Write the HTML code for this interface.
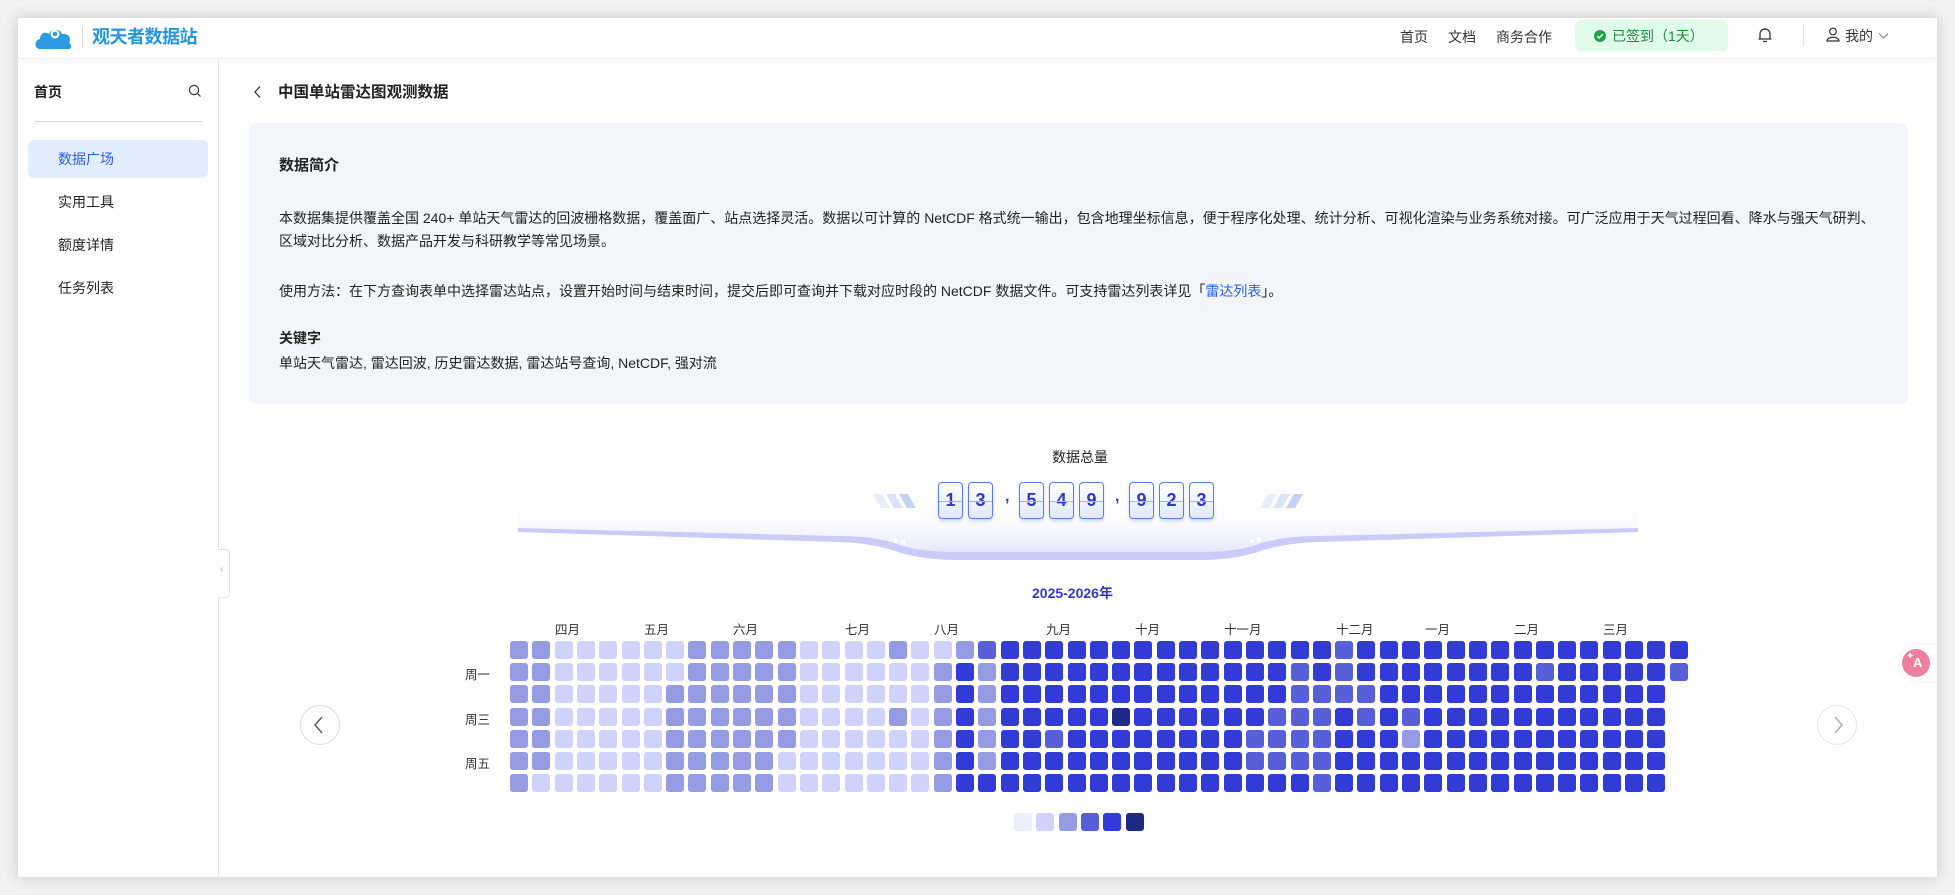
<!DOCTYPE html>
<html><head><meta charset="utf-8">
<style>
*{margin:0;padding:0;box-sizing:border-box}
body{width:1955px;height:895px;background:#f2f2f2;font-family:"Liberation Sans","Noto Sans CJK SC",sans-serif;color:#222;position:relative;overflow:hidden}
.win{position:absolute;left:18px;top:18px;width:1919px;height:859px;background:#fff;box-shadow:0 0 14px rgba(0,0,0,.18);overflow:hidden}
.hdr{position:absolute;left:0;top:0;width:100%;height:41px;background:#fff;border-bottom:1px solid #ececec;box-shadow:0 2px 8px rgba(0,0,0,.04)}
.abs{position:absolute;white-space:nowrap}
.side{position:absolute;left:0;top:41px;width:201px;height:818px;border-right:1px solid #e4e4e4}
.cell{position:absolute;width:18px;height:18px;border-radius:3px}
.dg{position:absolute;top:464px;width:25px;height:37px;border:1px solid #5a7cf0;border-radius:4px;background:linear-gradient(#fff,#dfeafe);box-shadow:0 2px 3px rgba(80,110,230,.25);color:#3438c8;font-weight:bold;font-size:18px;text-align:center;line-height:35px}
.dg:after{content:"";position:absolute;left:0;right:0;top:18px;height:1px;background:#9db4f5}
.cm{position:absolute;top:470px;color:#3438c8;font-weight:bold;font-size:16px}
.p{font-size:14px;color:#222;line-height:23px}
</style></head><body>
<div class="win">
 <div class="hdr">
  <svg class="abs" style="left:16px;top:7px" width="40" height="26" viewBox="0 0 40 26"><path d="M6 24 C0 24 0 15 6 14 C6 8 12 6 15 9 C17 3 26 3 28 9 C34 8 38 13 35 18 C39 20 37 25 33 24 Z" fill="#2a9be3"/><circle cx="21" cy="9" r="4.5" fill="#fff"/><circle cx="21" cy="9" r="2.3" fill="#2a9be3"/></svg>
  <div class="abs" style="left:64px;top:8px;width:1px;height:22px;background:#ddd"></div>
  <div class="abs" style="left:74px;top:5px;font-size:18px;font-weight:bold;color:#2496e0;letter-spacing:-0.5px">观天者数据站</div>
  <div class="abs" style="left:1382px;top:9px;font-size:14px;color:#333">首页</div>
  <div class="abs" style="left:1430px;top:9px;font-size:14px;color:#333">文档</div>
  <div class="abs" style="left:1478px;top:9px;font-size:14px;color:#333">商务合作</div>
  <div class="abs" style="left:1557px;top:2px;width:153px;height:31px;background:#e1fbe9;border-radius:6px"></div>
  <div class="abs" style="left:1576px;top:12px;width:12px;height:12px;border-radius:50%;background:#22a047"></div>
  <svg class="abs" style="left:1576px;top:12px" width="12" height="12"><path d="M3.3 6.2 L5.2 8 L8.7 4.3" stroke="#fff" stroke-width="1.5" fill="none"/></svg>
  <div class="abs" style="left:1594px;top:8px;font-size:14px;color:#1e8a3f">已签到（1天）</div>
  <svg class="abs" style="left:1739px;top:8px" width="16" height="18" viewBox="0 0 16 18"><path d="M3 13 V8 A5 5 0 0 1 13 8 V13 Z M1.5 13 H14.5 M6 15.5 H10 M8 2 V3" stroke="#333" stroke-width="1.3" fill="none"/></svg>
  <div class="abs" style="left:1785px;top:6px;width:1px;height:22px;background:#e5e5e5"></div>
  <svg class="abs" style="left:1808px;top:9px" width="14" height="15" viewBox="0 0 14 15"><circle cx="7" cy="4.5" r="3.3" stroke="#333" stroke-width="1.2" fill="none"/><path d="M1 14 C1 9 13 9 13 14 Z" stroke="#333" stroke-width="1.2" fill="none"/></svg>
  <div class="abs" style="left:1827px;top:8px;font-size:14px;color:#333">我的</div>
  <svg class="abs" style="left:1860px;top:14px" width="11" height="8"><path d="M1 1.5 L5.5 6 L10 1.5" stroke="#777" stroke-width="1" fill="none"/></svg>
 </div>
 <div class="side">
  <div class="abs" style="left:16px;top:23px;font-size:14px;font-weight:bold;color:#222">首页</div>
  <svg class="abs" style="left:170px;top:25px" width="14" height="14"><circle cx="6" cy="6" r="4.6" stroke="#333" stroke-width="1.2" fill="none"/><path d="M9.5 9.5 L12.5 12.5" stroke="#333" stroke-width="1.2"/></svg>
  <div class="abs" style="left:16px;top:62px;width:168px;height:1px;background:#d8d8d8"></div>
  <div class="abs" style="left:10px;top:81px;width:180px;height:38px;background:#e2edfe;border-radius:6px"></div>
  <div class="abs" style="left:40px;top:90px;font-size:14px;color:#2f5ff0">数据广场</div>
  <div class="abs" style="left:40px;top:133px;font-size:14px;color:#222">实用工具</div>
  <div class="abs" style="left:40px;top:176px;font-size:14px;color:#222">额度详情</div>
  <div class="abs" style="left:40px;top:219px;font-size:14px;color:#222">任务列表</div>
 </div>
 <div class="abs" style="left:200px;top:531px;width:12px;height:49px;background:#fff;border:1px solid #e4e4e4;border-left:none;border-radius:0 4px 4px 0"></div>
 <div class="abs" style="left:202px;top:546px;font-size:10px;color:#aaa">‹</div>

 <svg class="abs" style="left:235px;top:67px" width="10" height="14"><path d="M7 1.5 L2 7 L7 12.5" stroke="#333" stroke-width="1.3" fill="none"/></svg>
 <div class="abs" style="left:260px;top:62px;font-size:15.5px;font-weight:bold;color:#222">中国单站雷达图观测数据</div>

 <div class="abs" style="left:231px;top:105px;width:1659px;height:281px;background:#f2f5f9;border-radius:8px"></div>
 <div class="abs" style="left:261px;top:136px;font-size:15px;font-weight:bold;color:#222">数据简介</div>
 <div class="abs p" style="left:261px;top:189px">本数据集提供覆盖全国 240+ 单站天气雷达的回波栅格数据，覆盖面广、站点选择灵活。数据以可计算的 NetCDF 格式统一输出，包含地理坐标信息，便于程序化处理、统计分析、可视化渲染与业务系统对接。可广泛应用于天气过程回看、降水与强天气研判、</div>
 <div class="abs p" style="left:261px;top:212px">区域对比分析、数据产品开发与科研教学等常见场景。</div>
 <div class="abs p" style="left:261px;top:262px">使用方法：在下方查询表单中选择雷达站点，设置开始时间与结束时间，提交后即可查询并下载对应时段的 NetCDF 数据文件。可支持雷达列表详见「<span style="color:#2f5ff0">雷达列表</span>」。</div>
 <div class="abs p" style="left:261px;top:309px;font-weight:bold">关键字</div>
 <div class="abs p" style="left:261px;top:334px">单站天气雷达, 雷达回波, 历史雷达数据, 雷达站号查询, NetCDF, 强对流</div>

 <div class="abs" style="left:1034px;top:429px;font-size:14px;color:#222">数据总量</div>
 <svg class="abs" style="left:490px;top:470px" width="1140" height="85" viewBox="0 0 1140 85">
  <defs><linearGradient id="bg" x1="0" y1="0" x2="0" y2="1"><stop offset="0" stop-color="#fff" stop-opacity="0"/><stop offset="1" stop-color="#e6e7fd"/></linearGradient></defs>
  <path d="M10 22 Q570 0 1130 22 L1130 40 L810 48 Q770 48 745 58 Q725 64 690 64 L450 64 Q415 64 395 58 Q370 48 330 48 L10 40 Z" fill="url(#bg)"/>
  <path d="M10 40 L330 48 Q370 48 395 58 Q415 64 450 64 L690 64 Q725 64 745 58 Q770 48 810 48 L1130 40 L1130 44 L810 54 Q775 55 750 64 Q725 72 690 72 L450 72 Q415 72 390 64 Q365 55 330 54 L10 44 Z" fill="#c9cbf8"/>
  <rect x="386" y="51" width="4" height="4" fill="#fff"/><rect x="393" y="52" width="4" height="4" fill="#fff"/>
  <rect x="742" y="51" width="4" height="4" fill="#fff"/><rect x="749" y="50" width="4" height="4" fill="#fff"/>
  <path d="M365 6 h9 l8 14 h-9 Z" fill="#e6eefc"/><path d="M378 6 h9 l8 14 h-9 Z" fill="#d8e3fb"/><path d="M391 6 h9 l8 14 h-9 Z" fill="#c4d2f2"/>
  <path d="M752 20 h9 l8 -14 h-9 Z" fill="#e6eefc"/><path d="M765 20 h9 l8 -14 h-9 Z" fill="#d8e3fb"/><path d="M778 20 h9 l8 -14 h-9 Z" fill="#c4d2f2"/>
 </svg>
 <div class="dg" style="left:920px">1</div><div class="dg" style="left:950px">3</div>
 <div class="cm" style="left:987px">,</div>
 <div class="dg" style="left:1001px">5</div><div class="dg" style="left:1031px">4</div><div class="dg" style="left:1061px">9</div>
 <div class="cm" style="left:1097px">,</div>
 <div class="dg" style="left:1111px">9</div><div class="dg" style="left:1141px">2</div><div class="dg" style="left:1171px">3</div>

 <div class="abs" style="left:1014px;top:565px;font-size:14px;font-weight:bold;color:#3438c8">2025-2026年</div>
 <div id="grid"></div>
 <div class="abs" style="left:447px;top:646px;font-size:12.5px;color:#333">周一</div>
 <div class="abs" style="left:447px;top:691px;font-size:12.5px;color:#333">周三</div>
 <div class="abs" style="left:447px;top:735px;font-size:12.5px;color:#333">周五</div>

 <div class="abs" style="left:282px;top:687px;width:40px;height:40px;border:1px solid #ddd;border-radius:50%"></div>
 <svg class="abs" style="left:294px;top:697px" width="14" height="20"><path d="M10 2 L3 10 L10 18" stroke="#555" stroke-width="1.4" fill="none"/></svg>
 <div class="abs" style="left:1799px;top:687px;width:40px;height:40px;border:1px solid #e6e6e6;border-radius:50%"></div>
 <svg class="abs" style="left:1813px;top:697px" width="14" height="20"><path d="M4 2 L11 10 L4 18" stroke="#aaa" stroke-width="1.4" fill="none"/></svg>
 <div class="abs" style="left:1882px;top:627px;width:50px;height:36px;background:#fff;border-radius:18px 0 0 18px;box-shadow:0 0 6px rgba(0,0,0,.08)"></div>
 <div class="abs" style="left:1884px;top:631px;width:28px;height:28px;border-radius:50%;background:#ee7fa0"></div>
 <div class="abs" style="left:1895px;top:637px;font-size:13px;font-weight:bold;color:#fff">A</div>
 <div class="abs" style="left:1888px;top:633px;font-size:10px;color:#fff">✦</div>
</div>
<script>
var C=['#eceefe','#cfd3fb','#959ce3','#5760d9','#323bd6','#1e2a85'];
var L=[
[2,2,1,1,1,1,1,1,2,2,2,2,2,1,1,1,1,2,1,1,2,3,4,4,4],
[2,2,1,1,1,1,1,1,2,2,2,2,2,1,1,1,1,1,1,2,4,2,4,4,4],
[2,2,1,1,1,1,1,2,2,2,2,2,2,1,1,1,1,1,1,2,4,2,4,4,4],
[2,2,1,1,1,1,1,2,2,2,2,2,2,1,1,1,1,2,1,2,4,2,4,4,4],
[2,2,1,1,1,1,1,2,2,2,2,2,2,1,1,1,1,1,1,2,4,2,4,4,3],
[2,2,1,1,1,1,1,2,2,2,2,2,1,1,1,1,1,1,1,2,4,2,4,4,4],
[2,1,1,1,1,1,1,2,2,2,2,2,1,1,1,1,1,1,1,2,4,4,4,4,4]];
var S={'0_37':3,'1_35':3,'1_37':3,'1_46':3,'1_52':3,'2_35':3,'2_36':3,'2_37':3,'2_38':3,'3_27':5,'3_34':3,'3_35':3,'3_36':3,'3_38':3,'3_40':3,'4_24':3,'4_33':3,'4_34':3,'4_35':3,'4_36':3,'4_40':2,'5_33':3,'5_34':3,'5_35':3,'5_36':3,'6_36':3};
var h='';
for(var r=0;r<7;r++)for(var c=0;c<53;c++){
 if(c==52&&r>1)continue;
 var v=c<25?L[r][c]:4; if(c>=24&&S[r+'_'+c]!==undefined)v=S[r+'_'+c];
 h+='<div class="cell" style="left:'+(492+c*22.3).toFixed(1)+'px;top:'+(623+r*22.2).toFixed(1)+'px;background:'+C[v]+'"></div>';
}
var M=[['四月',2],['五月',6],['六月',10],['七月',15],['八月',19],['九月',24],['十月',28],['十一月',32],['十二月',37],['一月',41],['二月',45],['三月',49]];
M.forEach(function(m){h+='<div class="abs" style="left:'+(537+(m[1]-2)*22.3).toFixed(0)+'px;top:601px;font-size:12.5px;color:#333">'+m[0]+'</div>';});
for(var i=0;i<6;i++)h+='<div class="cell" style="left:'+(996+i*22.3).toFixed(1)+'px;top:795px;background:'+C[i]+'"></div>';
document.getElementById('grid').innerHTML=h;
</script>
</body></html>
